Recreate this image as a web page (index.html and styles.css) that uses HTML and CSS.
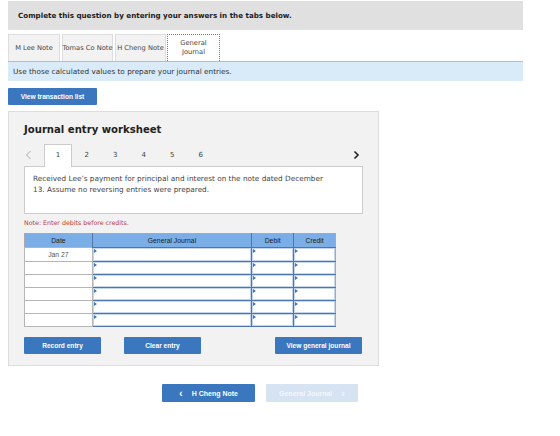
FILE: index.html
```html
<!DOCTYPE html>
<html lang="en">
<head>
    <meta charset="UTF-8">
    <meta name="viewport" content="width=device-width, initial-scale=1.0">
    <title>General Journal</title>
    <link rel="stylesheet" href="styles.css">
</head>
<body>
    <div class="page">
        <div class="instructions">Complete this question by entering your answers in the tabs below.</div>

        <!-- Tabs -->
        <div class="tabs">
            <div class="tab">M Lee Note</div>
            <div class="tab">Tomas Co Note</div>
            <div class="tab">H Cheng Note</div>
            <div class="tab active">General<br>Journal</div>
        </div>
        <div class="info-bar">Use those calculated values to prepare your journal entries.</div>

        <button class="btn btn-list">View transaction list</button>

        <!-- Worksheet -->
        <div class="worksheet">
            <h2>Journal entry worksheet</h2>

            <div class="steps">
                <span class="arrow prev">
                    <svg width="7" height="10" viewBox="0 0 7 10"><path d="M5.5 1 L1.5 5 L5.5 9" fill="none" stroke="#a8a8a8" stroke-width="1"/></svg>
                </span>
                <span class="step current">1</span>
                <span class="step">2</span>
                <span class="step">3</span>
                <span class="step">4</span>
                <span class="step">5</span>
                <span class="step">6</span>
                <span class="arrow next">
                    <svg width="7" height="10" viewBox="0 0 7 10"><path d="M1.5 1.5 L5 5 L1.5 8.5" fill="none" stroke="#222" stroke-width="1.6"/></svg>
                </span>
            </div>

            <div class="description">
                Received Lee’s payment for principal and interest on the note dated December 13. Assume no reversing entries were prepared.
            </div>

            <p class="note">Note: Enter debits before credits.</p>

            <table class="journal">
                <thead>
                    <tr>
                        <th class="col-date">Date</th>
                        <th class="col-account">General Journal</th>
                        <th class="col-amount">Debit</th>
                        <th class="col-amount">Credit</th>
                    </tr>
                </thead>
                <tbody>
                    <tr>
                        <td class="date-cell">Jan 27</td>
                        <td class="input-cell"><div class="field"></div></td>
                        <td class="input-cell"><div class="field"></div></td>
                        <td class="input-cell"><div class="field"></div></td>
                    </tr>
                    <tr>
                        <td class="date-cell"></td>
                        <td class="input-cell"><div class="field"></div></td>
                        <td class="input-cell"><div class="field"></div></td>
                        <td class="input-cell"><div class="field"></div></td>
                    </tr>
                    <tr>
                        <td class="date-cell"></td>
                        <td class="input-cell"><div class="field"></div></td>
                        <td class="input-cell"><div class="field"></div></td>
                        <td class="input-cell"><div class="field"></div></td>
                    </tr>
                    <tr>
                        <td class="date-cell"></td>
                        <td class="input-cell"><div class="field"></div></td>
                        <td class="input-cell"><div class="field"></div></td>
                        <td class="input-cell"><div class="field"></div></td>
                    </tr>
                    <tr>
                        <td class="date-cell"></td>
                        <td class="input-cell"><div class="field"></div></td>
                        <td class="input-cell"><div class="field"></div></td>
                        <td class="input-cell"><div class="field"></div></td>
                    </tr>
                    <tr>
                        <td class="date-cell"></td>
                        <td class="input-cell"><div class="field"></div></td>
                        <td class="input-cell"><div class="field"></div></td>
                        <td class="input-cell"><div class="field"></div></td>
                    </tr>
                </tbody>
            </table>

            <div class="actions">
                <button class="btn">Record entry</button>
                <button class="btn">Clear entry</button>
                <button class="btn btn-wide">View general journal</button>
            </div>
        </div>

        <!-- Bottom navigation -->
        <div class="tab-nav">
            <button class="btn btn-nav"><span class="chev">&lsaquo;</span>H Cheng Note</button>
            <button class="btn btn-nav disabled">General Journal<span class="chev after">&rsaquo;</span></button>
        </div>
    </div>
</body>
</html>
```

FILE: styles.css
```css
/* Basic Reset */
* {
    margin: 0;
    padding: 0;
    box-sizing: border-box;
}

body {
    background-color: #ffffff;
    font-family: "DejaVu Sans", Verdana, sans-serif;
    color: #333333;
}

.page {
    padding: 1px 8px 0 8px;
    width: 531px;
}

/* Instructions header */
.instructions {
    height: 29px;
    line-height: 29px;
    padding-left: 10px;
    background-color: #e0e0e0;
    font-size: 7.15px;
    font-weight: bold;
    color: #222222;
}

/* Tabs */
.tabs {
    display: flex;
    gap: 2px;
    margin-top: 4px;
    height: 27px;
}

.tab {
    display: flex;
    align-items: center;
    justify-content: center;
    text-align: center;
    height: 27px;
    background-color: #f2f2f2;
    border: 1px solid #dddddd;
    border-bottom: none;
    font-size: 6.7px;
    line-height: 9px;
    color: #444444;
    white-space: nowrap;
}

.tab:nth-child(1) { width: 52px; }
.tab:nth-child(2) { width: 51px; }
.tab:nth-child(3) { width: 51px; }

.tab.active {
    width: 53px;
    margin-left: -1px;
    background-color: #ffffff;
    border: 1px dotted #5b7fb5;
    border-bottom: none;
}

.info-bar {
    height: 20px;
    line-height: 19px;
    padding-left: 5px;
    background-color: #d9ebf9;
    border-top: 1px solid #bcbcbc;
    font-size: 7.3px;
    color: #333333;
}

/* Buttons */
.btn {
    display: inline-flex;
    align-items: center;
    justify-content: center;
    height: 17px;
    width: 77px;
    background-color: #3a77bf;
    border: none;
    border-radius: 1px;
    color: #ffffff;
    font-family: "Liberation Sans", Arial, sans-serif;
    font-size: 6.6px;
    font-weight: bold;
    cursor: pointer;
}

.btn-list {
    width: 89px;
    margin-top: 7px;
}

/* Worksheet panel */
.worksheet {
    width: 371px;
    height: 255px;
    margin-top: 6px;
    padding: 11px 15px 0 15px;
    background-color: #f2f2f2;
    border: 1px solid #dddddd;
}

.worksheet h2 {
    font-size: 10.1px;
    line-height: 14px;
    font-weight: bold;
    color: #222222;
}

.steps {
    display: flex;
    align-items: center;
    height: 22px;
    margin-top: 7px;
    position: relative;
    z-index: 1;
    font-size: 7px;
    color: #444444;
}

.step {
    width: 28.5px;
    text-align: center;
    line-height: 20px;
}

.step.current {
    width: 28px;
    height: 23px;
    margin-top: 1px;
    margin-right: 0.5px;
    background-color: #ffffff;
    border: 1px solid #cccccc;
    border-bottom: none;
}

.arrow {
    display: flex;
    align-items: center;
    height: 20px;
}

.prev {
    width: 20px;
    padding-left: 1px;
}

.next {
    margin-left: auto;
    margin-right: 3px;
}

.description {
    height: 48px;
    padding: 6px 30px 0 8px;
    background-color: #ffffff;
    border: 1px solid #cccccc;
    font-size: 7.3px;
    line-height: 11px;
    color: #444444;
}

.note {
    margin-top: 5px;
    font-size: 6.3px;
    line-height: 8px;
    color: #c0392b;
}

/* Journal table */
.journal {
    width: 312px;
    margin-top: 6px;
    border-collapse: collapse;
    border: 1px solid #a9a9a9;
    font-family: "Liberation Sans", Arial, sans-serif;
}

.journal th {
    height: 14px;
    background-color: #7baee6;
    border-left: 1px solid #4d76ab;
    font-size: 6.8px;
    font-weight: normal;
    color: #1a1a1a;
}

.journal th:first-child {
    border-left: none;
}

.col-date { width: 68px; }
.col-account { width: 160px; }
.col-amount { width: 42px; }

.journal td {
    height: 13px;
    padding: 0;
}

.journal tr:first-child td {
    height: 14px;
}

.date-cell {
    background-color: #ffffff;
    border: 1px solid #b5b5b5;
    text-align: center;
    font-size: 6.8px;
    color: #555555;
}

.input-cell {
    border: 1px solid #4d76ab;
    border-right-width: 0;
    background-color: #ffffff;
}

.field {
    position: relative;
    height: 100%;
    min-height: 11px;
    border: 1px solid #c4d5ed;
    background-color: #ffffff;
}

.field::before {
    content: "";
    position: absolute;
    top: 0;
    left: 0;
    border-top: 2px solid transparent;
    border-bottom: 2px solid transparent;
    border-left: 3px solid #3a77bf;
}

.actions {
    display: flex;
    margin-top: 10px;
}

.actions .btn:nth-child(2) {
    margin-left: 23px;
}

.btn-wide {
    width: 87px;
    margin-left: auto;
    margin-right: 1px;
}

/* Bottom navigation */
.tab-nav {
    display: flex;
    gap: 11px;
    margin-top: 18px;
    margin-left: 154px;
}

.btn-nav {
    width: 93px;
    height: 18px;
    font-size: 7px;
}

.btn-nav.disabled {
    width: 92px;
    background-color: #d6e3f2;
    color: #f4f7fb;
}

.chev {
    font-size: 11px;
    line-height: 10px;
    margin-right: 9px;
    margin-top: -1px;
}

.chev.after {
    margin-right: 0;
    margin-left: 9px;
}
```
